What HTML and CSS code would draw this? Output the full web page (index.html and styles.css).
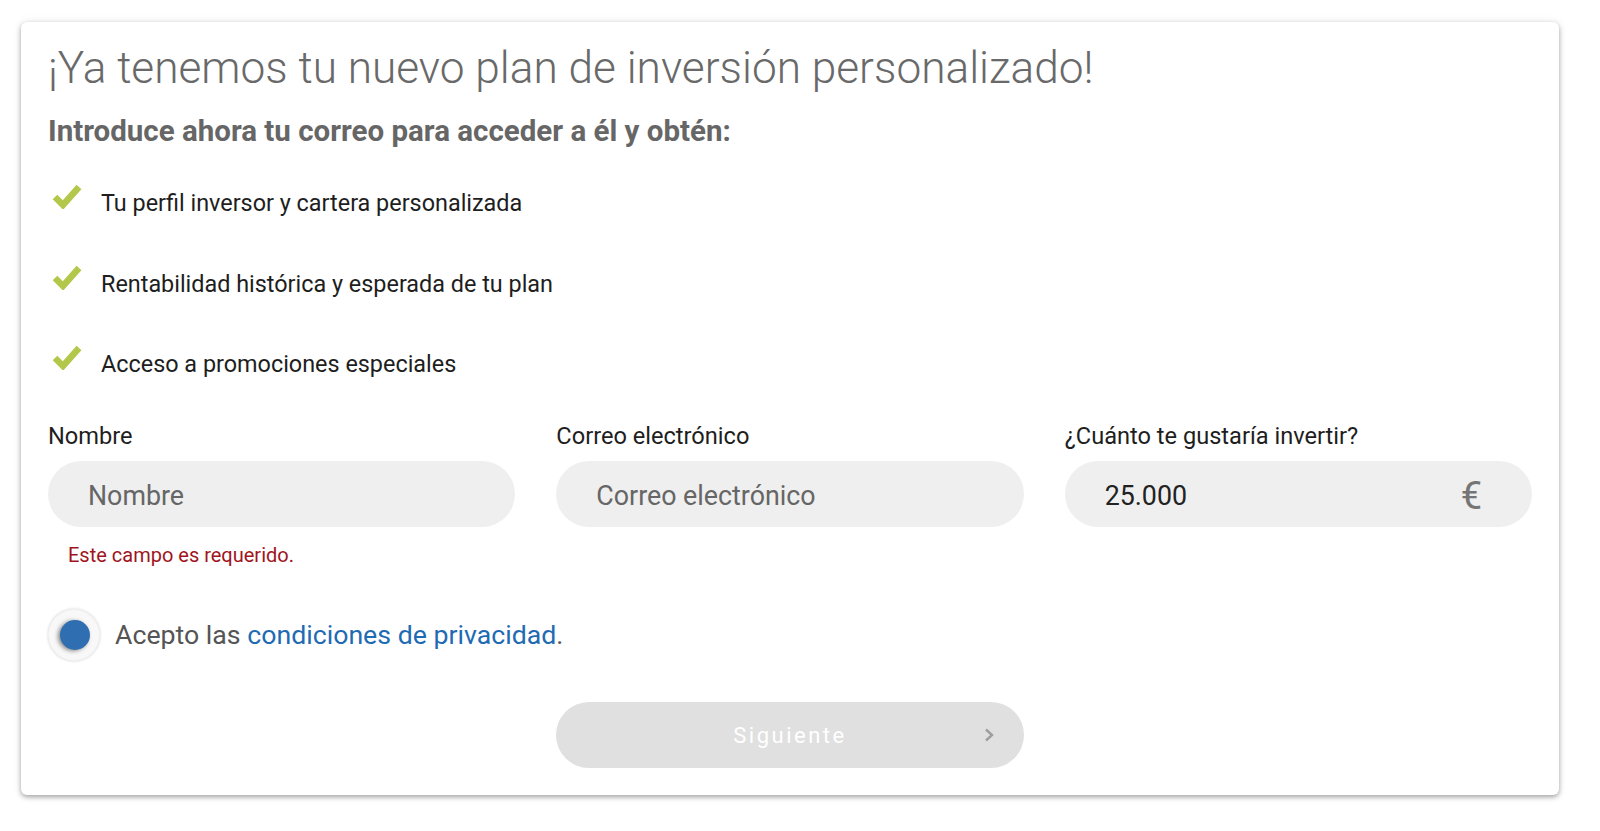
FILE: index.html
```html
<!DOCTYPE html>
<html lang="es">
<head>
    <meta charset="UTF-8">
    <title>Tu plan de inversión</title>
    <link rel="stylesheet" href="styles.css">
</head>
<body>
    <section class="plan-card">
        <h1>¡Ya tenemos tu nuevo plan de inversión personalizado!</h1>
        <h2>Introduce ahora tu correo para acceder a él y obtén:</h2>

        <ul class="ventajas">
            <li>
                <svg class="check" viewBox="0 0 30 26" width="30" height="26"><path d="M3 14 L11 22 L27 4" fill="none" stroke="#b3c84a" stroke-width="6.5"/></svg>
                Tu perfil inversor y cartera personalizada
            </li>
            <li>
                <svg class="check" viewBox="0 0 30 26" width="30" height="26"><path d="M3 14 L11 22 L27 4" fill="none" stroke="#b3c84a" stroke-width="6.5"/></svg>
                Rentabilidad histórica y esperada de tu plan
            </li>
            <li>
                <svg class="check" viewBox="0 0 30 26" width="30" height="26"><path d="M3 14 L11 22 L27 4" fill="none" stroke="#b3c84a" stroke-width="6.5"/></svg>
                Acceso a promociones especiales
            </li>
        </ul>

        <form class="registro" onsubmit="return false">
            <div class="campo">
                <label for="nombre">Nombre</label>
                <input type="text" id="nombre" placeholder="Nombre">
                <p class="error">Este campo es requerido.</p>
            </div>
            <div class="campo">
                <label for="correo">Correo electrónico</label>
                <input type="email" id="correo" placeholder="Correo electrónico">
            </div>
            <div class="campo">
                <label for="importe">¿Cuánto te gustaría invertir?</label>
                <div class="importe">
                    <input type="text" id="importe" value="25.000">
                    <span class="euro">€</span>
                </div>
            </div>

            <div class="privacidad">
                <span class="radio"><span class="radio-dot"></span></span>
                <span>Acepto las <a href="#">condiciones de privacidad</a>.</span>
            </div>

            <button type="submit" class="siguiente" disabled>
                Siguiente
                <svg class="chevron" viewBox="0 0 10 14" width="10" height="14"><path d="M2 1.5 L8 7 L2 12.5" fill="none" stroke="#9e9e9e" stroke-width="2.4"/></svg>
            </button>
        </form>
    </section>
</body>
</html>
```

FILE: styles.css
```css
:root {
    --gris-texto: #666666;
    --gris-campo: #efefef;
    --verde: #b3c84a;
    --azul: #1f6bb3;
    --rojo: #a0141e;
}

body {
    margin: 0;
    padding: 22px 41px 37px 21px;
    background-color: #fff;
    font-family: Roboto, "Liberation Sans", Arial, sans-serif;
    color: #1e1e1e;
}

.plan-card {
    background-color: #fff;
    border-radius: 6px;
    box-shadow: 0 2px 5px rgba(0, 0, 0, 0.35), 0 0 12px rgba(0, 0, 0, 0.06);
    padding: 21px 27px 27px 27px;
}

.plan-card h1 {
    margin: 0;
    font-size: 44.2px;
    font-weight: 300;
    line-height: 50px;
    color: #696969;
}

.plan-card h2 {
    margin: 21px 0 0 0;
    font-size: 29.5px;
    font-weight: 700;
    line-height: 34px;
    color: var(--gris-texto);
}

.ventajas {
    list-style: none;
    margin: 35px 0 0 0;
    padding: 0;
    display: flex;
    flex-direction: column;
    gap: 40.6px;
}

.ventajas li {
    display: flex;
    align-items: center;
    gap: 19px;
    font-size: 23.4px;
    line-height: 40px;
    color: #1e1e1e;
}

.check {
    margin-left: 4px;
    margin-top: -14px;
}

.registro {
    margin-top: 38px;
    display: grid;
    grid-template-columns: repeat(3, 1fr);
    column-gap: 41px;
}

.campo label {
    display: block;
    font-size: 23.6px;
    line-height: 28px;
    margin-bottom: 11px;
}

.campo input {
    box-sizing: border-box;
    width: 100%;
    height: 66px;
    border: none;
    border-radius: 33px;
    background-color: var(--gris-campo);
    padding: 3px 40px 0 40px;
    font-family: inherit;
    font-size: 26.8px;
    color: #222;
    outline: none;
}

.campo input::placeholder {
    color: var(--gris-texto);
}

.importe {
    position: relative;
}

.importe .euro {
    position: absolute;
    right: 50px;
    top: 50%;
    transform: translateY(-46%);
    font-size: 38px;
    color: #757575;
}

.error {
    margin: 16px 0 0 20px;
    font-size: 20px;
    line-height: 24px;
    color: var(--rojo);
}

.privacidad {
    grid-column: 1 / -1;
    margin-top: 42px;
    display: flex;
    align-items: center;
    gap: 15px;
    font-size: 26.7px;
    color: #555;
}

.privacidad a {
    color: var(--azul);
    text-decoration: none;
}

.radio {
    width: 52px;
    height: 52px;
    border-radius: 50%;
    background-color: #f8f8f8;
    box-shadow: 0 0 3px rgba(0, 0, 0, 0.18), inset 0 0 2px rgba(0, 0, 0, 0.08);
    display: flex;
    align-items: center;
    justify-content: center;
}

.radio-dot {
    width: 30px;
    height: 30px;
    border-radius: 50%;
    background-color: #2f6eb1;
    box-shadow: -2px 1px 4px rgba(0, 0, 0, 0.45);
    margin-left: 2px;
}

.siguiente {
    grid-column: 2;
    margin-top: 41px;
    height: 66px;
    border: none;
    border-radius: 33px;
    background-color: #e0e0e0;
    color: #fff;
    font-family: inherit;
    font-size: 22px;
    letter-spacing: 2.5px;
    position: relative;
}

.chevron {
    position: absolute;
    right: 30px;
    top: 26px;
}
```
